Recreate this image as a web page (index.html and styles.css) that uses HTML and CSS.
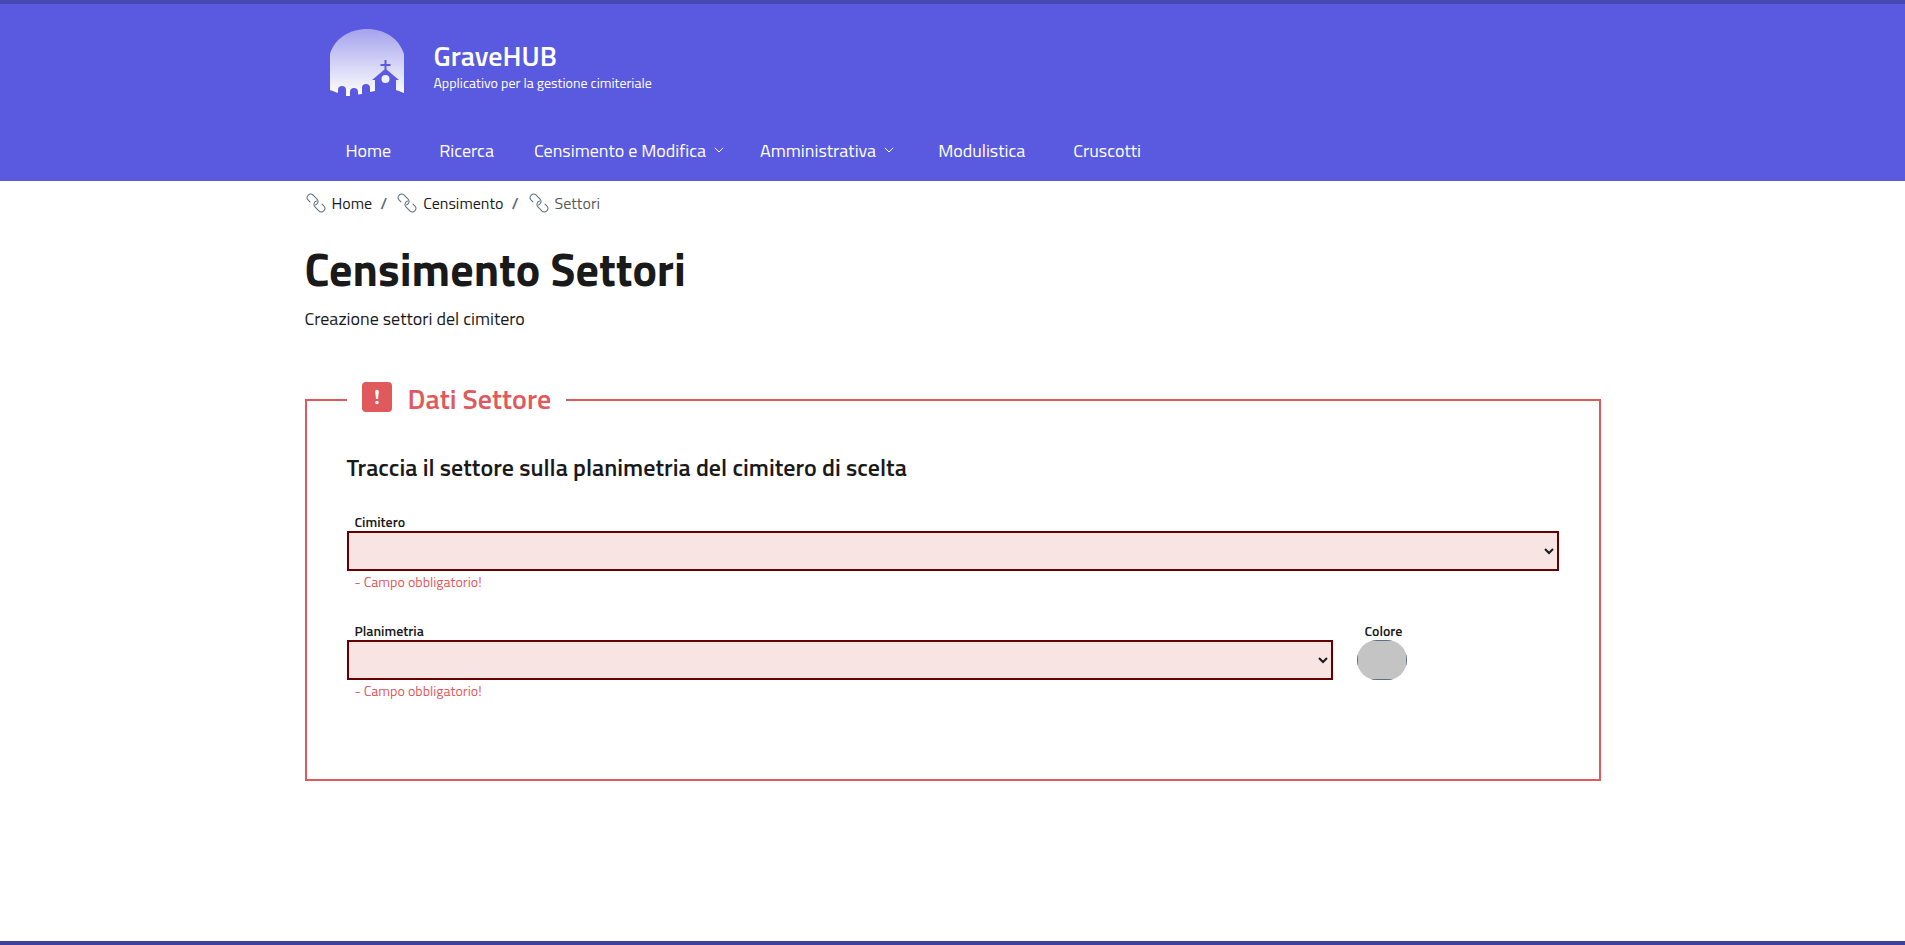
FILE: index.html
```html
<!DOCTYPE html>
<html lang="it">
<head>
    <meta charset="UTF-8">
    <meta name="viewport" content="width=device-width, initial-scale=1.0">
    <title>GraveHUB - Censimento Settori</title>
    <link rel="stylesheet" href="styles.css">
</head>
<body>
    <svg class="sprite" aria-hidden="true">
        <symbol id="it-link" viewBox="0 0 20 20" fill="none" stroke="currentColor" stroke-linecap="round">
            <g transform="rotate(45 10 10)">
                <path d="M5 13.500H2.500a3.500 3.500 0 0 1 0-7h5.500a3.500 3.500 0 0 1 3 5.200"/>
                <path d="M15 6.500h2.500a3.500 3.500 0 0 1 0 7h-5.500a3.500 3.500 0 0 1-3-5.200"/>
            </g>
        </symbol>
        <symbol id="it-expand" viewBox="0 0 10 6" fill="none" stroke="currentColor">
            <path d="M.8.8 5 5 9.200.8"/>
        </symbol>
    </svg>
    <header class="header">
        <div class="container">
            <div class="brand">
                <svg class="logo" viewBox="0 0 74 67" aria-hidden="true">
                    <defs>
                        <linearGradient id="sky" x1="0" y1="0" x2="0" y2="1">
                            <stop offset="0" stop-color="#a5a3ec"/>
                            <stop offset="1" stop-color="#ffffff"/>
                        </linearGradient>
                    </defs>
                    <path fill="url(#sky)" d="M0 25C5 9 20 0 37 0s32 9 37 25v39l-8-3V51h3L56.500 40.500V37h4v-2h-4v-4h-2v4h-4v2h4v3.500L42 51h3v11l-5 1v-4c0-3-1.500-4-4-4s-4 1-4 4v6l-4 .5V66v-3c0-3-1.500-4-4-4s-4 1-4 4v4h-4v-6c0-3-1.500-4-4-4s-4 1-4 4v3l-8-3z"/>
                    <circle class="window" cx="55.500" cy="50" r="4"/>
                </svg>
                <div class="brand-text">
                    <a class="brand-title" href="#">GraveHUB</a>
                    <span class="brand-tagline">Applicativo per la gestione cimiteriale</span>
                </div>
            </div>
            <nav class="nav">
                <a class="nav-link" href="#">Home</a>
                <a class="nav-link" href="#">Ricerca</a>
                <a class="nav-link dropdown" href="#">Censimento e Modifica <svg class="expand"><use href="#it-expand"/></svg></a>
                <a class="nav-link dropdown" href="#">Amministrativa <svg class="expand"><use href="#it-expand"/></svg></a>
                <a class="nav-link" href="#">Modulistica</a>
                <a class="nav-link" href="#">Cruscotti</a>
            </nav>
        </div>
    </header>
    <main class="container">
        <nav aria-label="Percorso">
            <ol class="breadcrumb">
                <li><svg class="link-icon"><use href="#it-link"/></svg><a href="#">Home</a><span class="separator">/</span></li>
                <li><svg class="link-icon"><use href="#it-link"/></svg><a href="#">Censimento</a><span class="separator">/</span></li>
                <li class="active"><svg class="link-icon"><use href="#it-link"/></svg><a href="#">Settori</a></li>
            </ol>
        </nav>
        <h1>Censimento Settori</h1>
        <p class="lead">Creazione settori del cimitero</p>
        <form>
            <fieldset class="box">
                <legend>
                    <span class="alert-icon">
                        <svg viewBox="0 0 30 30" aria-hidden="true">
                            <path d="M13.200 9.500a1.800 1.800 0 0 1 3.600 0l-.8 7.500h-2z"/>
                            <circle cx="15" cy="20.500" r="1.700"/>
                        </svg>
                    </span>
                    Dati Settore
                </legend>
                <h2>Traccia il settore sulla planimetria del cimitero di scelta</h2>
                <div class="row">
                    <div class="field grow">
                        <label for="cimitero">Cimitero</label>
                        <select id="cimitero" name="cimitero"><option value=""></option></select>
                        <span class="error">- Campo obbligatorio!</span>
                    </div>
                </div>
                <div class="row">
                    <div class="field grow">
                        <label for="planimetria">Planimetria</label>
                        <select id="planimetria" name="planimetria"><option value=""></option></select>
                        <span class="error">- Campo obbligatorio!</span>
                    </div>
                    <div class="field color-field">
                        <label for="colore">Colore</label>
                        <input type="color" id="colore" name="colore" value="#c4c4c4">
                    </div>
                </div>
            </fieldset>
        </form>
    </main>
    <footer class="footer"></footer>
</body>
</html>
```
FILE: styles.css
```css
:root {
    --primary: #5a5ae0;
    --primary-dark: #4848b3;
    --footer: #3f3f9d;
    --text: #1a1a1a;
    --danger: #e0595c;
}
* {
    box-sizing: border-box;
}
body {
    margin: 0;
    min-height: 100vh;
    display: flex;
    flex-direction: column;
    font-family: "Titillium Web", Roboto, sans-serif;
    font-size: 18px;
    color: var(--text);
    background-color: #fff;
}
a {
    color: inherit;
    text-decoration: none;
}
.sprite {
    display: none;
}
.container {
    width: 100%;
    max-width: 1320px;
    margin: 0 auto;
    padding: 0 12px;
}
.header {
    border-top: 4px solid var(--primary-dark);
    background-color: var(--primary);
    color: #fff;
}
.brand {
    display: flex;
    align-items: center;
    gap: 30px;
    height: 117px;
    padding-left: 25px;
}
.logo {
    width: 74px;
    height: 67px;
}
.logo .window {
    fill: #f0f0fc;
}
.brand-text {
    display: flex;
    flex-direction: column;
    gap: 1px;
    padding-top: 7px;
}
.brand-title {
    font-size: 28px;
    font-weight: 600;
    line-height: 32px;
}
.brand-tagline {
    font-size: 14px;
    line-height: 20px;
}
.nav {
    display: flex;
    height: 60px;
    padding: 0 0 2px 17px;
}
.nav-link {
    display: flex;
    align-items: center;
    padding: 0 24px;
}
.nav-link.dropdown {
    gap: 8px;
    padding: 0 20px 0 16px;
}
.expand {
    width: 10px;
    height: 6px;
}
.breadcrumb {
    display: flex;
    margin: 0;
    padding: 11px 0 0 1px;
    list-style: none;
    font-size: 16px;
    line-height: 22px;
}
.breadcrumb li {
    display: flex;
    align-items: center;
}
.breadcrumb .active {
    color: #5a5a5a;
}
.link-icon {
    width: 20px;
    height: 20px;
    margin-right: 6px;
    color: #5c6f82;
}
.separator {
    padding: 0 10px 0 8px;
    font-weight: 600;
    color: #5c6f82;
}
h1 {
    margin: 27px 0 0;
    font-size: 46px;
    font-weight: 700;
    line-height: 56px;
}
.lead {
    margin: 8px 0 0;
    line-height: 28px;
}
.box {
    margin: 49px 0 0;
    padding: 33px 40px 48px;
    border: 2px solid var(--danger);
}
.box legend {
    display: flex;
    align-items: flex-start;
    gap: 16px;
    padding: 0 15px 2px;
    font-size: 28px;
    font-weight: 600;
    line-height: 34px;
    color: var(--danger);
}
.alert-icon {
    width: 30px;
    height: 30px;
    border-radius: 4px;
    background-color: var(--danger);
}
.alert-icon svg {
    display: block;
    fill: #fff;
}
h2 {
    margin: 0 0 30px;
    font-size: 24px;
    font-weight: 600;
    line-height: 32px;
}
.row {
    display: flex;
    gap: 24px;
    margin-bottom: 30px;
}
.field {
    display: flex;
    flex-direction: column;
}
.grow {
    flex: 1;
}
.color-field {
    flex: 0 0 202px;
}
label {
    padding: 0 8px;
    font-size: 14px;
    font-weight: 600;
    line-height: 18px;
}
select {
    width: 100%;
    height: 40px;
    border: 2px solid #660000;
    border-radius: 0;
    background-color: #f9e4e4;
    color: var(--text);
}
.error {
    padding: 0 8px;
    font-size: 14px;
    line-height: 21px;
    color: var(--danger);
}
input[type="color"] {
    appearance: none;
    width: 50px;
    height: 40px;
    padding: 0;
    border: 0;
    border-radius: 20px;
    background-color: #c4c4c4;
    overflow: hidden;
}
input[type="color"]::-webkit-color-swatch-wrapper {
    padding: 0;
}
input[type="color"]::-webkit-color-swatch {
    border: 1px solid #5c6f82;
}
.footer {
    height: 4px;
    margin-top: auto;
    background-color: var(--footer);
}
```
